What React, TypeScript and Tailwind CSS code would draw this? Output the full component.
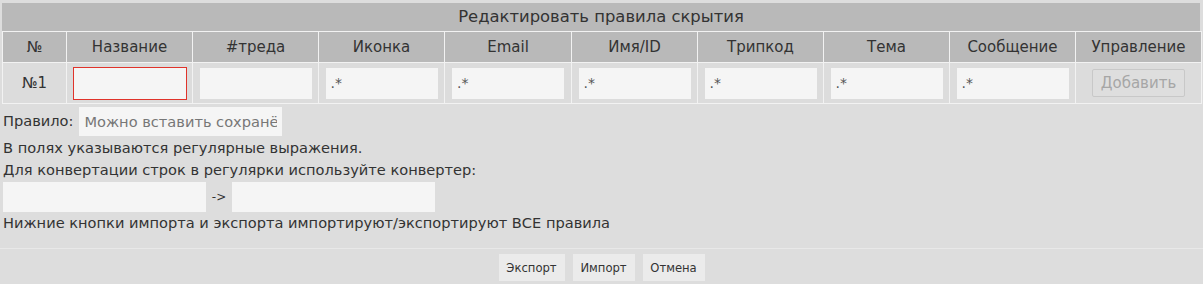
import React from "react";

const cols = [
  { title: "№", w: "w-[63px]" },
  { title: "Название", w: "w-[125px]" },
  { title: "#треда", w: "w-[125px]" },
  { title: "Иконка", w: "w-[125px]" },
  { title: "Email", w: "w-[126px]" },
  { title: "Имя/ID", w: "w-[125px]" },
  { title: "Трипкод", w: "w-[125px]" },
  { title: "Тема", w: "w-[125px]" },
  { title: "Сообщение", w: "w-[125px]" },
  { title: "Управление", w: "w-[125px]" },
];

const inputCls =
  "block w-[112px] h-[31px] bg-[#f5f5f5] px-[5px] text-[14px] text-[#555] outline-none";

export default function App() {
  return (
    <div
      className="w-[1203px] h-[284px] overflow-hidden bg-[#dddddd] text-[#333] text-[14.6px] leading-[22px]"
      style={{ fontFamily: '"DejaVu Sans", sans-serif' }}
    >
      <div className="pl-[2px] pr-[3px] pt-[3px]">
        <div className="h-[28px] bg-[#b9b9b9] flex items-center justify-center text-[16.4px]">
          Редактировать правила скрытия
        </div>
        <table className="border-separate border-spacing-[1px] bg-[#f2f2f2] w-[1199px] table-fixed">
          <thead>
            <tr className="h-[30px] bg-[#b9b9b9]">
              {cols.map((c) => (
                <th key={c.title} className={`${c.w} font-normal text-[15px] p-0 text-center`}>
                  {c.title}
                </th>
              ))}
            </tr>
          </thead>
          <tbody>
            <tr className="h-[40px] bg-[#dcdcdc]">
              <td className="text-center text-[15px] p-0">№1</td>
              <td className="p-0">
                <div className="flex justify-center">
                  <input className={`${inputCls} w-[114px] h-[33px] border border-[#e0332b]`} />
                </div>
              </td>
              <td className="p-0">
                <div className="flex justify-center">
                  <input className={inputCls} />
                </div>
              </td>
              {[0, 1, 2, 3, 4, 5].map((i) => (
                <td key={i} className="p-0">
                  <div className="flex justify-center">
                    <input className={inputCls} defaultValue=".*" />
                  </div>
                </td>
              ))}
              <td className="p-0">
                <div className="flex justify-center">
                  <button
                    disabled
                    className="h-[28px] w-[93px] border border-[#c8c8c8] rounded-[2px] bg-[#dedede] text-[#a6a6a6] text-[15px]"
                  >
                    Добавить
                  </button>
                </div>
              </td>
            </tr>
          </tbody>
        </table>
      </div>

      <div className="pl-[3px] pt-[2px]">
        <div className="flex items-center gap-[6px] h-[30px]">
          <span>Правило:</span>
          <input
            className="w-[203px] h-[29px] bg-[#f5f5f5] px-[5px] text-[14.6px] outline-none placeholder:text-[#777]"
            placeholder="Можно вставить сохранённое правило"
          />
        </div>
        <div className="mt-[1px]">В полях указываются регулярные выражения.</div>
        <div>Для конвертации строк в регулярки используйте конвертер:</div>
        <div className="flex items-center h-[31px]">
          <input className="w-[203px] h-[30px] bg-[#f5f5f5] px-[5px] outline-none" />
          <span className="w-[26px] text-center text-[12px]">-&gt;</span>
          <input className="w-[203px] h-[30px] bg-[#f5f5f5] px-[5px] outline-none" />
        </div>
        <div>Нижние кнопки импорта и экспорта импортируют/экспортируют ВСЕ правила</div>
      </div>

      <div className="mt-[14px] border-t border-[#e8e8e8] flex justify-center gap-[8px] pt-[5px]">
        <button className="h-[27px] w-[66px] bg-[#ebebeb] text-[11.6px]">Экспорт</button>
        <button className="h-[27px] w-[62px] bg-[#ebebeb] text-[11.6px]">Импорт</button>
        <button className="h-[27px] w-[62px] bg-[#ebebeb] text-[11.6px]">Отмена</button>
      </div>
    </div>
  );
}
